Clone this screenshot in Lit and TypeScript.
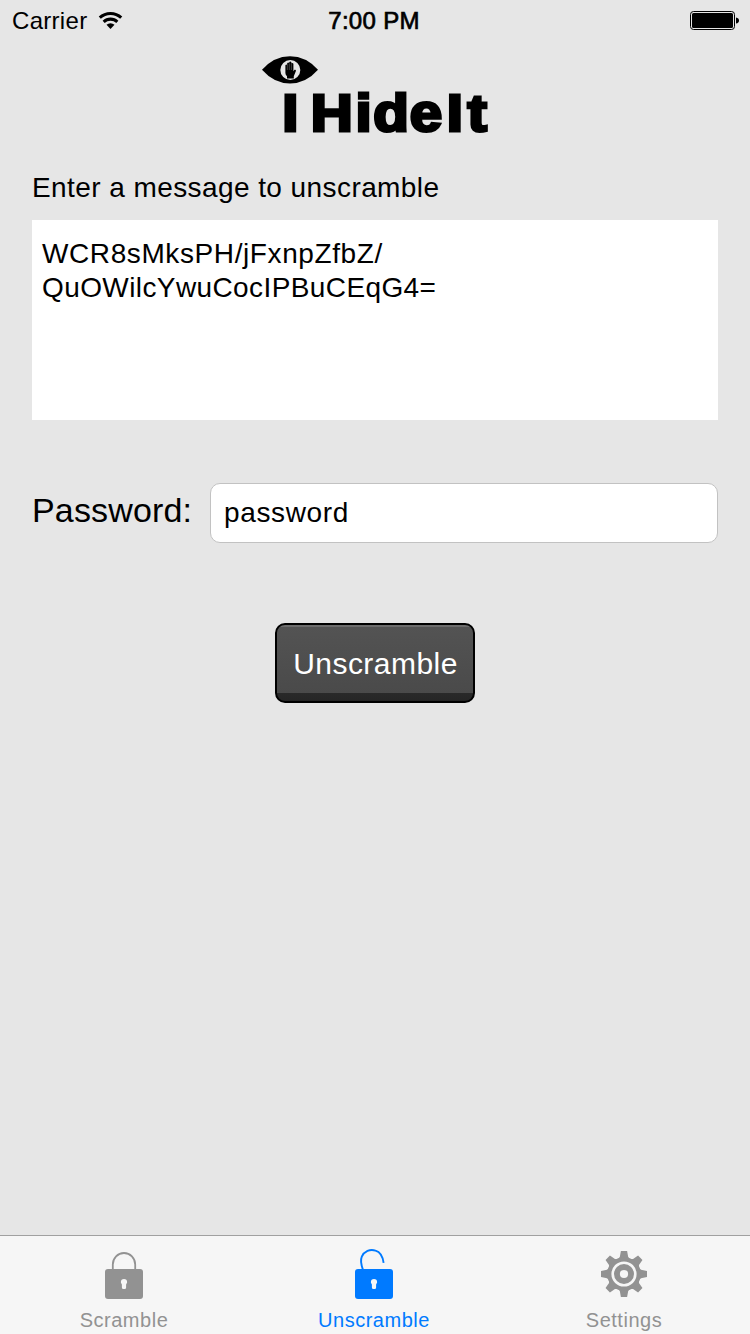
import { LitElement, html, css, svg } from "lit";
import { customElement, property } from "lit/decorators.js";

const keyhole = svg`<path fill="#f6f6f6" d="M19 27a3.1 3.1 0 0 1 3.1 3.1c0 1-.5 1.7-1 2.3V35.6a1.5 1.5 0 0 1-1.5 1.5h-1.2a1.5 1.5 0 0 1-1.5-1.5V32.4c-.5-.6-1-1.3-1-2.3A3.1 3.1 0 0 1 19 27z"/>`;

const lockIcon = html`<svg width="38" height="52" viewBox="0 0 38 52">
  <path d="M7.8 18V12.5a11.2 11.5 0 0 1 22.4 0V18" fill="none" stroke="currentColor" stroke-width="1.8"/>
  <rect x="0" y="17" width="38" height="30" rx="3" fill="currentColor"/>${keyhole}
</svg>`;

const unlockIcon = html`<svg width="38" height="52" viewBox="0 0 38 52">
  <path d="M8 17.8C5.6 11.5 5.2 8.4 6.8 4.7A11 11.3 0 0 1 20.5-1.4Q27.2.5 28.6 10.8" fill="none" stroke="currentColor" stroke-width="1.9"/>
  <rect x="0" y="17" width="38" height="30" rx="3" fill="currentColor"/>${keyhole}
</svg>`;

const teeth = [0, 45, 90, 135, 180, 225, 270, 315];
const gearIcon = html`<svg width="48" height="52" viewBox="0 0 48 52">
  <g fill="currentColor">
    ${teeth.map((a) => svg`<path transform="rotate(${a} 24 22)" d="M17.6 7.5L19.8 5L20.9-1H27.1L28.2 5L30.4 7.5Z"/>`)}
    <circle cx="24" cy="22" r="16.8"/>
  </g>
  <circle cx="24" cy="22" r="11.3" fill="none" stroke="#f6f6f6" stroke-width="2.6"/>
  <circle cx="24" cy="22" r="4.1" fill="#f6f6f6"/>
</svg>`;

@customElement("tab-item")
class TabItem extends LitElement {
  @property() label = "";
  @property() icon: unknown;
  static styles = css`
    :host { display: flex; flex-direction: column; align-items: center; width: 248px; color: #929292; }
    :host([active]) { color: #007aff; }
    svg { display: block; overflow: visible; margin-top: 16px; }
    span { font-size: 20px; line-height: 24px; letter-spacing: .52px; margin-top: 4px; }
  `;
  render() {
    return html`${this.icon}<span>${this.label}</span>`;
  }
}

@customElement("app-root")
class AppRoot extends LitElement {
  static styles = css`
    :host { display: flex; flex-direction: column; width: 750px; height: 1334px; overflow: hidden;
      background: #e6e6e6; color: #000; font-family: "Liberation Sans", Arial, sans-serif; }
    svg { display: block; overflow: visible; }
    .status { display: grid; grid-template-columns: 1fr auto 1fr; align-items: center; height: 40px;
      padding: 1px 11px 0 12px; box-sizing: border-box; font-size: 24px; line-height: 28px; }
    .carrier { display: flex; align-items: center; gap: 11px; letter-spacing: .3px; }
    .time { -webkit-text-stroke: .7px #000; letter-spacing: .3px; padding-right: 3px; }
    .battery { justify-self: end; }
    .logo { margin: 15px 0 0 262px; }
    .logo text { font-weight: 700; font-size: 52px; stroke: #000; stroke-width: 3px; }
    main { display: flex; flex-direction: column; flex: 1; padding: 0 32px; }
    .hint { font-size: 28px; line-height: 32px; letter-spacing: .42px; margin-top: 32px; }
    .message { margin-top: 16px; height: 200px; box-sizing: border-box; padding: 17px 10px; background: #fff;
      font-size: 28px; line-height: 34px; letter-spacing: .6px; }
    .message .second { letter-spacing: .4px; }
    .row { display: flex; height: 60px; margin-top: 63px; }
    .row label { width: 178px; font-size: 34px; line-height: 54px; letter-spacing: .15px; }
    .field { flex: 1; box-sizing: border-box; border: 1px solid #c2c2c2; border-radius: 10px; background: #fff;
      padding-left: 13px; font-size: 28px; line-height: 57px; letter-spacing: .65px; }
    .button { align-self: center; box-sizing: border-box; width: 200px; height: 80px; margin-top: 80px; padding: 1px 0 0 1px;
      border: 2px solid #000; border-radius: 10px; color: #fff; font: 30px/76px "Liberation Sans", Arial, sans-serif;
      letter-spacing: .45px; text-align: center;
      background: linear-gradient(#6c6c6c 0 2px, #535353 2px, #4a4a4a 68px, #292929 68px, #252525); }
    nav { display: flex; gap: 2px; box-sizing: border-box; height: 99px; border-top: 1px solid #a0a0a0; background: #f6f6f6; }
  `;
  render() {
    return html`
      <div class="status">
        <div class="carrier"><span>Carrier</span>
          <svg width="25" height="19" viewBox="0 0 26 20">
            <g fill="none" stroke="#000" stroke-width="3.2">
              <path d="M1.7 7A16.5 16.5 0 0 1 24.3 7"/><path d="M5.8 11.4A10.5 10.5 0 0 1 20.2 11.4"/>
            </g>
            <path d="M8.8 14.6A6.2 6.2 0 0 1 17.2 14.6L13 19Z"/>
          </svg>
        </div>
        <div class="time">7:00 PM</div>
        <svg class="battery" width="49" height="20" viewBox="0 0 49 20">
          <rect x=".5" y=".5" width="44" height="18" rx="3" fill="none" stroke="#000"/>
          <rect x="2" y="2" width="41" height="15" rx="1.5"/>
          <path d="M46 6.5Q49 7 49 9.5T46 12.5Z"/>
        </svg>
      </div>
      <svg class="logo" width="230" height="85" viewBox="262 55 230 85">
        <path d="M262 69.7Q274 56.2 290 56.2T318 69.7Q306 83.4 290 83.4T262 69.7Z"/>
        <circle cx="290.3" cy="70" r="10" fill="#e6e6e6"/>
        <path d="M285.4 73V65.2Q286.3 63.8 287.2 65.2V63.2Q288.2 61.8 289.2 63.2V62.2Q290.3 60.8 291.4 62.2V63.6Q292.5 62.3 293.4 63.8V71.2L294.5 69.8Q296.2 69.4 295.9 71L293.8 76.2V78.4H287V76.2Q285.4 75 285.4 73Z"/>
        <path d="M287.3 70V65M289.3 70V63.5M291.4 70V64" stroke="#888" stroke-width=".45"/>
        <text transform="scale(1.12 1)" y="131.5" x="252.1 277.4 317.5 333.3 365.9 398.8 417.5">IHideIt</text>
      </svg>
      <main>
        <div class="hint">Enter a message to unscramble</div>
        <div class="message">WCR8sMksPH/jFxnpZfbZ/<br><span class="second">QuOWilcYwuCocIPBuCEqG4=</span></div>
        <div class="row"><label>Password:</label><div class="field">password</div></div>
        <button class="button">Unscramble</button>
      </main>
      <nav>
        <tab-item label="Scramble" .icon=${lockIcon}></tab-item>
        <tab-item active label="Unscramble" .icon=${unlockIcon}></tab-item>
        <tab-item label="Settings" .icon=${gearIcon}></tab-item>
      </nav>`;
  }
}
